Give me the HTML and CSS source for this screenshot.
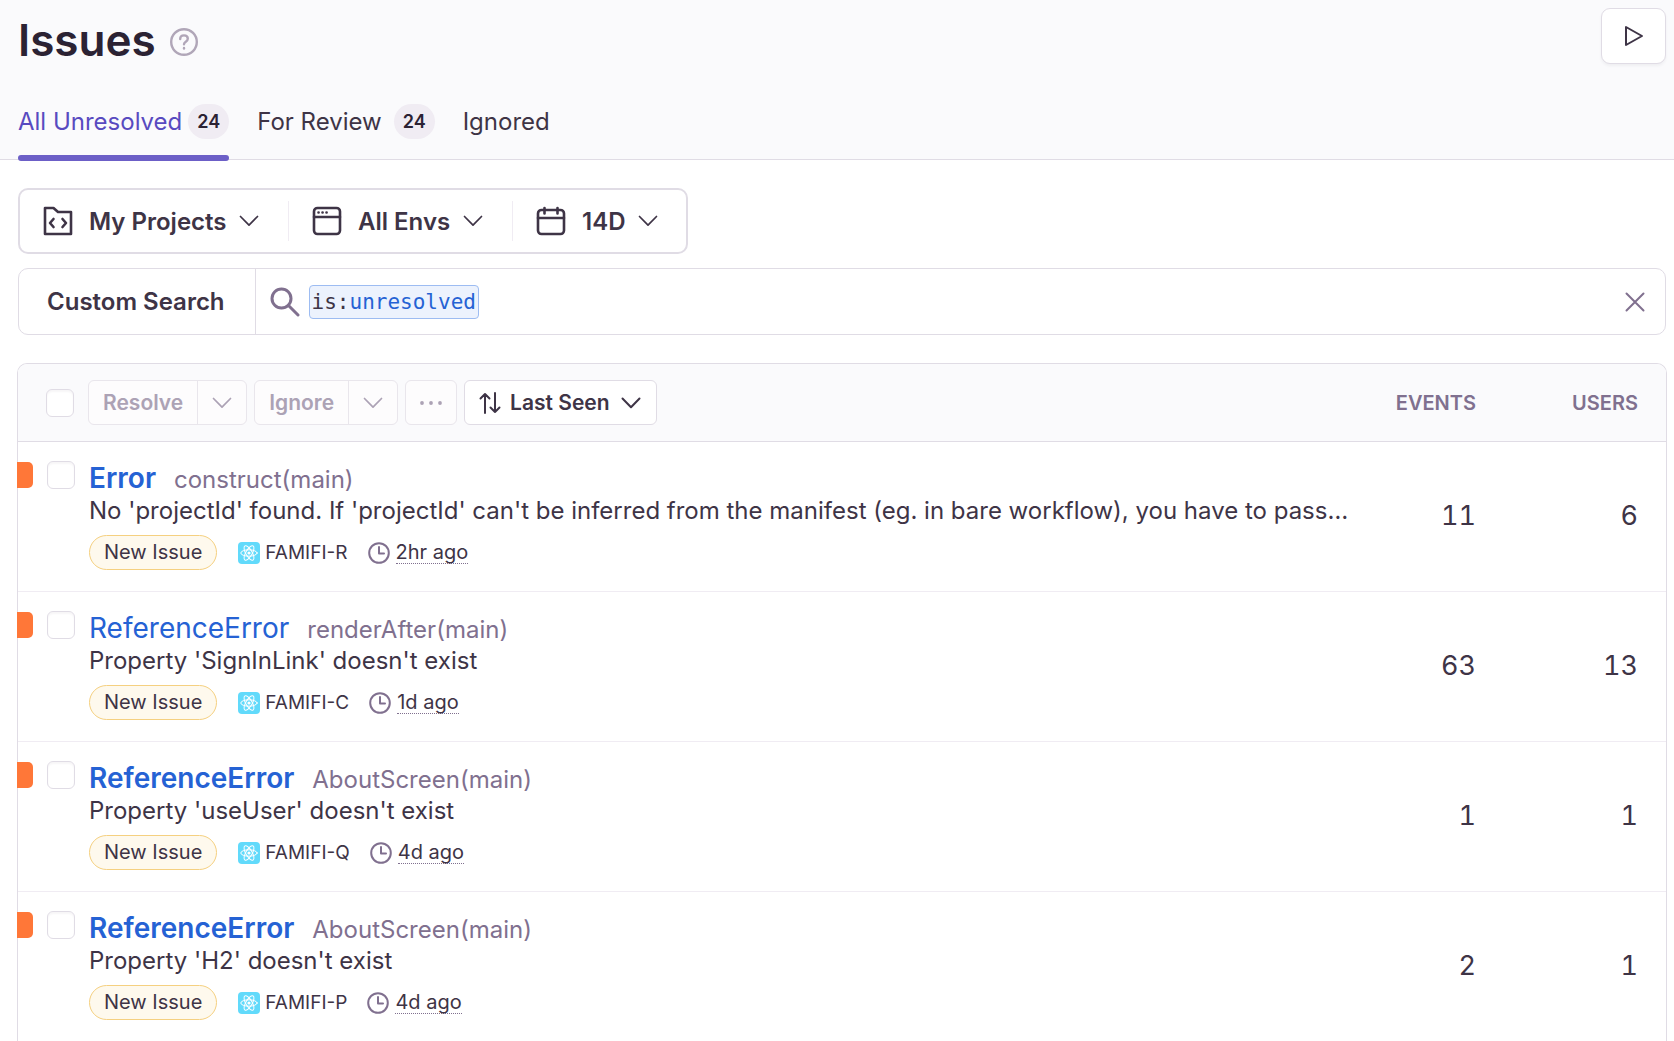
FILE: index.html
```html
<!DOCTYPE html>
<html lang="en">

<head>
    <meta charset="UTF-8">
    <meta name="viewport" content="width=device-width, initial-scale=1.0">
    <title>Issues</title>
    <link rel="stylesheet" href="styles.css">
</head>

<body>
    <!-- Shared icons -->
    <svg class="icon-defs" aria-hidden="true">
        <symbol id="chevron" viewBox="0 0 20 12">
            <path d="M1.5 1.5 10 10.2 18.5 1.5" />
        </symbol>
        <symbol id="clock" viewBox="0 0 22 22">
            <circle cx="11" cy="11" r="9.8" />
            <path d="M11 5v6.5h5" />
        </symbol>
        <symbol id="react" viewBox="0 0 22 22">
            <rect width="22" height="22" rx="4" fill="#61dafb" />
            <g fill="none" stroke="#fff" stroke-width="1">
                <ellipse cx="11" cy="11" rx="8.2" ry="3.2" />
                <ellipse cx="11" cy="11" rx="8.2" ry="3.2" transform="rotate(60 11 11)" />
                <ellipse cx="11" cy="11" rx="8.2" ry="3.2" transform="rotate(120 11 11)" />
            </g>
            <circle cx="11" cy="11" r="1.6" fill="#fff" />
        </symbol>
    </svg>

    <!-- Page header -->
    <header class="header">
        <div class="header-top">
            <h1>Issues</h1>
            <button type="button" class="help" aria-label="Help">
                <svg width="28" height="28" viewBox="0 0 28 28">
                    <circle cx="14" cy="14" r="12.8" />
                    <path d="M10.2 11c0-2.2 1.6-3.6 3.8-3.6s3.800 1.400 3.800 3.400c0 2.900-3.800 2.900-3.800 5.400" />
                    <path d="M14 20v.5" />
                </svg>
            </button>
            <button type="button" class="play" aria-label="Start real-time updates">
                <svg width="20" height="22" viewBox="0 0 20 22">
                    <path d="M2 2v18l16-9z" />
                </svg>
            </button>
        </div>
        <nav class="tabs">
            <a href="#" class="tab active">All Unresolved <span class="count">24</span></a>
            <a href="#" class="tab review">For Review <span class="count">24</span></a>
            <a href="#" class="tab">Ignored</a>
        </nav>
    </header>

    <main class="content">
        <!-- Page filters -->
        <div class="filters">
            <label class="filter">
                <svg class="filter-icon" width="30" height="30" viewBox="0 0 30 30">
                    <path d="M2 28V2h8.5l4.5 4h13v22z" />
                    <path d="m10.5 13-3.5 4 3.5 4M19.5 13l3.5 4-3.5 4" />
                </svg>
                <select aria-label="Projects">
                    <option>My Projects</option>
                </select>
                <svg class="chevron" width="20" height="12"><use href="#chevron" /></svg>
            </label>
            <label class="filter">
                <svg class="filter-icon" width="30" height="30" viewBox="0 0 30 30">
                    <rect x="2" y="2" width="26" height="26" rx="3.5" />
                    <path d="M2 11h26M6.5 6.5h.1M10.5 6.5h.1M14.5 6.5h.1" />
                </svg>
                <select aria-label="Environments">
                    <option>All Envs</option>
                </select>
                <svg class="chevron" width="20" height="12"><use href="#chevron" /></svg>
            </label>
            <label class="filter">
                <svg class="filter-icon" width="30" height="30" viewBox="0 0 30 30">
                    <rect x="2" y="4" width="26" height="24" rx="3.5" />
                    <path d="M2 12h26M8.5 2v5.5M21.5 2v5.5" />
                </svg>
                <select aria-label="Date range">
                    <option>14D</option>
                </select>
                <svg class="chevron" width="20" height="12"><use href="#chevron" /></svg>
            </label>
        </div>

        <!-- Search -->
        <form class="search">
            <button type="button" class="search-name">Custom Search</button>
            <label class="search-box">
                <svg class="search-icon" width="30" height="30" viewBox="0 0 30 30">
                    <circle cx="11.5" cy="11.5" r="9.5" />
                    <path d="m18.5 18.5 9.5 9.5" />
                </svg>
                <span class="token">is:<span class="token-value">unresolved</span></span>
                <input type="text" aria-label="Search issues">
            </label>
            <button type="button" class="clear" aria-label="Clear search">
                <svg width="20" height="20" viewBox="0 0 20 20">
                    <path d="m1.5 1.5 17 17M18.5 1.5l-17 17" />
                </svg>
            </button>
        </form>

        <!-- Issue list -->
        <table class="issues">
            <thead>
                <tr>
                    <th class="col-issue">
                        <div class="toolbar">
                            <input type="checkbox" class="check" aria-label="Select all">
                            <div class="button-group">
                                <button type="button" disabled>Resolve</button>
                                <button type="button" class="more" aria-label="Resolve options" disabled>
                                    <svg class="chevron" width="20" height="12"><use href="#chevron" /></svg>
                                </button>
                            </div>
                            <div class="button-group">
                                <button type="button" disabled>Ignore</button>
                                <button type="button" class="more" aria-label="Ignore options" disabled>
                                    <svg class="chevron" width="20" height="12"><use href="#chevron" /></svg>
                                </button>
                            </div>
                            <div class="button-group">
                                <button type="button" class="dots" aria-label="More actions" disabled>
                                    <svg width="24" height="4" viewBox="0 0 24 4">
                                        <circle cx="3" cy="2" r="1.9" />
                                        <circle cx="12" cy="2" r="1.9" />
                                        <circle cx="21" cy="2" r="1.9" />
                                    </svg>
                                </button>
                            </div>
                            <label class="sort">
                                <svg class="sort-icon" width="22" height="22" viewBox="0 0 22 22">
                                    <path d="M6 21V2M1.5 6.5 6 2l4.5 4.5M16 1v19M11.5 15.5 16 20l4.5-4.5" />
                                </svg>
                                <select aria-label="Sort by">
                                    <option>Last Seen</option>
                                </select>
                                <svg class="chevron" width="20" height="12"><use href="#chevron" /></svg>
                            </label>
                        </div>
                    </th>
                    <th class="col-events">EVENTS</th>
                    <th class="col-users">USERS</th>
                </tr>
            </thead>
            <tbody>
                <tr>
                    <td>
                        <div class="issue">
                            <span class="level"></span>
                            <input type="checkbox" class="check" aria-label="Select FAMIFI-R">
                            <div class="issue-body">
                                <div class="issue-title"><a href="#" class="unread">Error</a><span class="culprit">construct(main)</span></div>
                                <div class="message">No 'projectId' found. If 'projectId' can't be inferred from the manifest (eg. in bare workflow), you have to pass…</div>
                                <div class="meta">
                                    <span class="tag">New Issue</span>
                                    <svg class="platform" width="22" height="22"><use href="#react" /></svg>
                                    <span class="short-id">FAMIFI-R</span>
                                    <svg class="clock" width="22" height="22"><use href="#clock" /></svg>
                                    <time>2hr ago</time>
                                </div>
                            </div>
                        </div>
                    </td>
                    <td class="number">11</td>
                    <td class="number">6</td>
                </tr>
                <tr>
                    <td>
                        <div class="issue">
                            <span class="level"></span>
                            <input type="checkbox" class="check" aria-label="Select FAMIFI-C">
                            <div class="issue-body">
                                <div class="issue-title"><a href="#">ReferenceError</a><span class="culprit">renderAfter(main)</span></div>
                                <div class="message">Property 'SignInLink' doesn't exist</div>
                                <div class="meta">
                                    <span class="tag">New Issue</span>
                                    <svg class="platform" width="22" height="22"><use href="#react" /></svg>
                                    <span class="short-id">FAMIFI-C</span>
                                    <svg class="clock" width="22" height="22"><use href="#clock" /></svg>
                                    <time>1d ago</time>
                                </div>
                            </div>
                        </div>
                    </td>
                    <td class="number">63</td>
                    <td class="number">13</td>
                </tr>
                <tr>
                    <td>
                        <div class="issue">
                            <span class="level"></span>
                            <input type="checkbox" class="check" aria-label="Select FAMIFI-Q">
                            <div class="issue-body">
                                <div class="issue-title"><a href="#" class="unread">ReferenceError</a><span class="culprit">AboutScreen(main)</span></div>
                                <div class="message">Property 'useUser' doesn't exist</div>
                                <div class="meta">
                                    <span class="tag">New Issue</span>
                                    <svg class="platform" width="22" height="22"><use href="#react" /></svg>
                                    <span class="short-id">FAMIFI-Q</span>
                                    <svg class="clock" width="22" height="22"><use href="#clock" /></svg>
                                    <time>4d ago</time>
                                </div>
                            </div>
                        </div>
                    </td>
                    <td class="number">1</td>
                    <td class="number">1</td>
                </tr>
                <tr>
                    <td>
                        <div class="issue">
                            <span class="level"></span>
                            <input type="checkbox" class="check" aria-label="Select FAMIFI-P">
                            <div class="issue-body">
                                <div class="issue-title"><a href="#" class="unread">ReferenceError</a><span class="culprit">AboutScreen(main)</span></div>
                                <div class="message">Property 'H2' doesn't exist</div>
                                <div class="meta">
                                    <span class="tag">New Issue</span>
                                    <svg class="platform" width="22" height="22"><use href="#react" /></svg>
                                    <span class="short-id">FAMIFI-P</span>
                                    <svg class="clock" width="22" height="22"><use href="#clock" /></svg>
                                    <time>4d ago</time>
                                </div>
                            </div>
                        </div>
                    </td>
                    <td class="number">2</td>
                    <td class="number">1</td>
                </tr>
            </tbody>
        </table>
    </main>
</body>

</html>
```
FILE: styles.css
```css
* {
    box-sizing: border-box;
}

body {
    margin: 0;
    font-family: Inter, sans-serif;
    font-size: 24px;
    color: #3e3446;
    background-color: #fff;
}

button,
input,
select {
    font: inherit;
    color: inherit;
    margin: 0;
    padding: 0;
    border: none;
    background: none;
}

select {
    appearance: none;
    font-weight: 600;
}

button,
select {
    cursor: pointer;
}

svg {
    display: block;
    flex: none;
    fill: none;
    stroke: currentColor;
    stroke-width: 2;
    stroke-linecap: round;
    stroke-linejoin: round;
}

.icon-defs {
    position: absolute;
    width: 0;
    height: 0;
}

.chevron {
    stroke-width: 1.7;
}

/* Page header */
.header {
    padding: 8px 8px 0 18px;
    background-color: #fafafc;
    border-bottom: 1px solid #e0dce5;
}

.header-top {
    display: flex;
    align-items: flex-start;
}

h1 {
    margin: 0;
    font-size: 44px;
    font-weight: 600;
    line-height: 64px;
    color: #2b2233;
}

.help {
    margin: 20px 0 0 14px;
    color: #b0a6b8;
}

.help svg {
    stroke-width: 2.4;
}

.play {
    display: flex;
    align-items: center;
    justify-content: center;
    width: 65px;
    height: 56px;
    margin-left: auto;
    background-color: #fff;
    border: 1px solid #e0dce5;
    border-radius: 9px;
    box-shadow: 0 2px 3px rgba(43, 34, 51, 0.05);
}

/* Tabs */
.tabs {
    display: flex;
    gap: 28px;
    margin-top: 17px;
}

.tab {
    display: flex;
    align-items: center;
    gap: 6px;
    height: 72px;
    padding-bottom: 1px;
    margin-bottom: -2px;
    border-bottom: 6px solid transparent;
    color: inherit;
    text-decoration: none;
}

.tab.active {
    position: relative;
    color: #584ac0;
}

/* Rounded bar under the current tab */
.tab.active::after {
    content: "";
    position: absolute;
    left: 0;
    right: 0;
    bottom: -6px;
    height: 6px;
    border-radius: 3px;
    background-color: #6c5fc7;
}

.tab.review {
    gap: 12px;
}

.count {
    padding: 0 9px;
    border-radius: 18px;
    background-color: #f0ecf3;
    font-size: 18px;
    font-weight: 600;
    line-height: 35px;
    color: #2b2233;
}

.content {
    padding: 28px 7px 0 17px;
}

/* Page filters */
.filters {
    display: inline-flex;
    padding: 11px 0;
    margin-left: 1px;
    border: 2px solid #e0dce5;
    border-radius: 10px;
}

.filter {
    display: flex;
    align-items: center;
    height: 40px;
    padding: 0 29px 0 23px;
    border-right: 1px solid #f0ecf3;
}

.filter:last-child {
    padding-right: 28px;
    border-right: none;
}

.filter-icon {
    margin-right: 16px;
    stroke-width: 2.6;
}

.filter .chevron {
    margin-left: 12px;
}

/* Search */
.search {
    display: flex;
    height: 67px;
    margin: 14px 1px 28px;
    border: 1px solid #e0dce5;
    border-radius: 10px;
}

.search-name {
    padding: 0 30px 0 28px;
    border-right: 1px solid #e0dce5;
    font-weight: 600;
}

.search-box {
    display: flex;
    flex: 1;
    align-items: center;
    padding-left: 14px;
}

.search-icon {
    color: #80708f;
    stroke-width: 3;
}

.token {
    padding: 0 2px;
    margin-left: 9px;
    border: 1px solid #9dbcf2;
    border-radius: 4px;
    background-color: #ecf2fd;
    font-family: "DejaVu Sans Mono", monospace;
    font-size: 21px;
    line-height: 32px;
}

.token-value {
    color: #2562d4;
}

.search-box input {
    flex: 1;
    min-width: 0;
    padding-left: 8px;
    outline: none;
}

.clear {
    padding: 0 20px;
    color: #80708f;
}

/* Issue list */
.issues {
    width: 100%;
    table-layout: fixed;
    border: 1px solid #e0dce5;
    border-bottom: none;
    border-radius: 10px 10px 0 0;
    border-spacing: 0;
}

th {
    height: 78px;
    padding: 0;
    background-color: #fafafc;
    border-bottom: 1px solid #e0dce5;
    font-size: 20px;
    font-weight: 600;
    color: #80708f;
    text-align: right;
}

th:first-child {
    border-top-left-radius: 9px;
}

th:last-child {
    border-top-right-radius: 9px;
}

.col-events {
    width: 124px;
}

.col-users {
    width: 190px;
    padding-right: 28px;
}

.toolbar {
    display: flex;
    align-items: center;
    gap: 7px;
    padding-left: 28px;
    font-size: 21px;
}

.toolbar .check {
    margin-right: 7px;
}

.check {
    flex: none;
    appearance: none;
    width: 28px;
    height: 28px;
    border: 1px solid #e0dce5;
    border-radius: 6px;
    background-color: #fff;
    box-shadow: inset 0 2px 2px rgba(43, 34, 51, 0.04);
}

.check:checked {
    background-color: #6c5fc7;
}

.button-group {
    display: flex;
    height: 45px;
    border: 1px solid #e9e6ec;
    border-radius: 6px;
    background-color: #fdfcfd;
    color: #aca2b5;
}

.button-group button {
    display: flex;
    align-items: center;
    padding: 0 14px;
    font-weight: 600;
    cursor: default;
}

.button-group .more {
    border-left: 1px solid #e9e6ec;
}

.button-group .dots {
    padding: 0 13px;
}

.dots svg {
    fill: currentColor;
    stroke: none;
}

.sort {
    display: flex;
    align-items: center;
    height: 45px;
    padding: 0 15px 0 14px;
    border: 1px solid #e0dce5;
    border-radius: 6px;
    background-color: #fff;
    color: #3e3446;
}

.sort-icon {
    margin-right: 9px;
}

.sort .chevron {
    margin-left: 11px;
    stroke-width: 2;
}

td {
    padding: 0;
    border-bottom: 1px solid #f0ecf3;
    text-align: right;
}

td:last-child {
    padding-right: 28px;
}

.issue {
    position: relative;
    display: flex;
    padding: 19px 0 21px 29px;
    text-align: left;
}

/* Colour mark on the panel edge */
.level {
    position: absolute;
    top: 20px;
    left: -1px;
    width: 16px;
    height: 26px;
    border-radius: 0 5px 5px 0;
    background-color: #ff7738;
}

.issue-body {
    flex: 1;
    min-width: 0;
    padding-left: 14px;
}

.issue-title {
    display: flex;
    align-items: baseline;
    gap: 18px;
    height: 34px;
    line-height: 34px;
}

.issue-title a {
    font-size: 28px;
    color: #2562d4;
    text-decoration: none;
}

.issue-title .unread {
    font-weight: 600;
}

.culprit {
    color: #80708f;
}

.message {
    overflow: hidden;
    line-height: 32px;
    white-space: nowrap;
    text-overflow: ellipsis;
}

.meta {
    display: flex;
    align-items: center;
    margin-top: 8px;
    font-size: 20px;
}

.tag {
    padding: 0 14px;
    margin-right: 21px;
    border: 1px solid #f5d080;
    border-radius: 18px;
    background-color: #fef9ed;
    line-height: 33px;
}

.platform {
    stroke: none;
}

.short-id {
    margin: 0 20px 0 5px;
    font-size: 19px;
}

.clock {
    margin-right: 6px;
    color: #80708f;
}

time {
    border-bottom: 1px dotted #80708f;
    line-height: 22px;
}

.number {
    padding-bottom: 2px;
    font-size: 27px;
    font-variant-numeric: tabular-nums;
}
```
